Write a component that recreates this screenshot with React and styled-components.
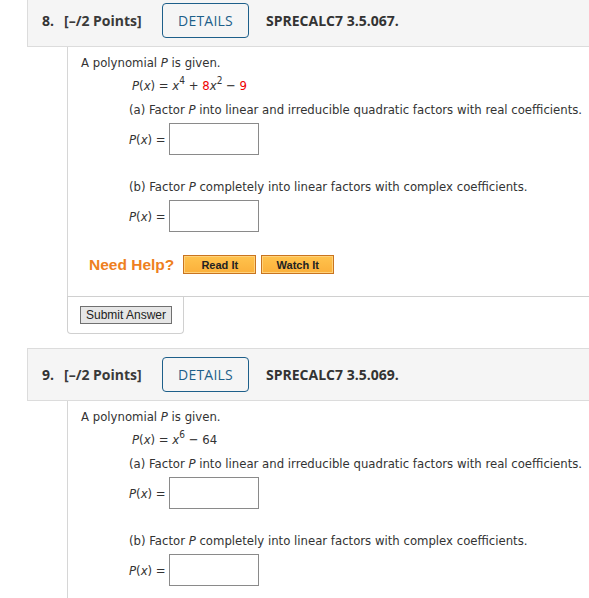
import React from 'react'
import styled, { createGlobalStyle } from 'styled-components'

const GlobalStyle = createGlobalStyle`
body {
  margin: 0;
  background: #fff;
  overflow: hidden;
}
`

const questions = [
  { num: '8.', code: 'SPRECALC7 3.5.067.', kind: 'quartic', help: true },
  { num: '9.', code: 'SPRECALC7 3.5.069.', kind: 'sixth', help: false },
]

const Poly = ({ kind }) =>
  kind === 'quartic' ? (
    <>
      <I>x</I><Sup>4</Sup> + <Red>8</Red><I>x</I><Sup>2</Sup> − <Red>9</Red>
    </>
  ) : (
    <>
      <I>x</I><Sup>6</Sup> − 64
    </>
  )

const Question = ({ q }) => (
  <Block>
    <Header>
      <Num>{q.num}</Num>
      <Points>[–/2 Points]</Points>
      <DetailsBtn>DETAILS</DetailsBtn>
      <Code>{q.code}</Code>
    </Header>
    <Body>
      <Line $top={0}>A polynomial <I>P</I> is given.</Line>
      <Indent>
        <Equation><I>P</I>(<I>x</I>) = <Poly kind={q.kind} /></Equation>
        <Line $top={6}>(a) Factor <I>P</I> into linear and irreducible quadratic factors with real coefficients.</Line>
        <AnswerRow>
          <Label><I>P</I>(<I>x</I>) =</Label>
          <AnswerBox />
        </AnswerRow>
        <Line $top={23}>(b) Factor <I>P</I> completely into linear factors with complex coefficients.</Line>
        <AnswerRow>
          <Label><I>P</I>(<I>x</I>) =</Label>
          <AnswerBox />
        </AnswerRow>
      </Indent>
      {q.help && (
        <HelpRow>
          <NeedHelp>Need Help?</NeedHelp>
          <HelpBtn>Read It</HelpBtn>
          <HelpBtn>Watch It</HelpBtn>
        </HelpRow>
      )}
    </Body>
    {q.help && (
      <Footer>
        <SubmitBox>
          <SubmitBtn>Submit Answer</SubmitBtn>
        </SubmitBox>
      </Footer>
    )}
  </Block>
)

const App = () => (
  <>
    <GlobalStyle />
    <Page>
      {questions.map((q) => (
        <Question key={q.num} q={q} />
      ))}
    </Page>
  </>
)

export default App

const Page = styled.div`
margin-top: -6px;
padding-left: 27px;
display: flex;
flex-direction: column;
gap: 14px;
`

const Block = styled.div`
display: flex;
flex-direction: column;
`

const Header = styled.div`
height: 51px;
display: flex;
align-items: center;
background: #f5f5f5;
border: 1px solid #dcdcdc;
border-right: none;
padding-left: 14px;
font-family: "Open Sans", sans-serif;
font-weight: 700;
font-size: 14px;
color: #333;
`

const Num = styled.span`
width: 22px;
`

const Points = styled.span`
color: #3a3a3a;
width: 98px;
`

const DetailsBtn = styled.div`
box-sizing: border-box;
width: 87px;
height: 35px;
border: 1px solid #1d5f8a;
border-radius: 4px;
display: flex;
align-items: center;
justify-content: center;
font-weight: 400;
color: #1d5f8a;
letter-spacing: 0.2px;
margin-right: 17px;
`

const Code = styled.span`
color: #333;
`

const Body = styled.div`
margin-left: 40px;
border-left: 1px solid #d6d6d6;
padding: 7px 0 22px 13px;
font-family: "DejaVu Sans Condensed", "DejaVu Sans", sans-serif;
font-size: 13px;
color: #333;
`

const Indent = styled.div`
padding-left: 48px;
`

const Line = styled.div`
line-height: 18px;
margin-top: ${(p) => p.$top}px;
`

const Equation = styled.div`
line-height: 18px;
margin-top: 5px;
padding-left: 3px;
`

const I = styled.i`
font-style: italic;
`

const Red = styled.span`
color: #e00;
`

const Sup = styled.sup`
font-size: 10px;
line-height: 0;
vertical-align: 6px;
`

const AnswerRow = styled.div`
display: flex;
align-items: center;
margin-top: 4px;
`

const Label = styled.span`
width: 40px;
`

const AnswerBox = styled.div`
box-sizing: border-box;
width: 90px;
height: 32px;
border: 1px solid #8a8a8a;
background: #fff;
`

const HelpRow = styled.div`
display: flex;
align-items: center;
gap: 5px;
margin-top: 23px;
padding-left: 8px;
`

const NeedHelp = styled.span`
font-family: "Liberation Sans", Arial, sans-serif;
font-weight: 700;
font-size: 15.5px;
color: #ee7f21;
margin-right: 4px;
`

const HelpBtn = styled.div`
box-sizing: border-box;
height: 19px;
width: 73px;
border: 1px solid #c9741f;
box-shadow: inset 0 0 0 1px #ffd27a;
background: linear-gradient(#ffc34d, #fbb03b);
display: flex;
align-items: center;
justify-content: center;
font-family: "Liberation Sans", Arial, sans-serif;
font-weight: 700;
font-size: 11px;
color: #222;
`

const Footer = styled.div`
margin-left: 40px;
border-top: 1px solid #d0d0d0;
`

const SubmitBox = styled.div`
box-sizing: border-box;
width: 117px;
height: 37px;
border: 1px solid #d0d0d0;
border-top: none;
border-radius: 0 0 4px 4px;
display: flex;
align-items: center;
padding-left: 12px;
`

const SubmitBtn = styled.div`
box-sizing: border-box;
height: 18px;
padding: 0 5px;
border: 1px solid #707070;
background: #e6e6e6;
font-family: "Liberation Sans", Arial, sans-serif;
font-size: 12px;
color: #222;
line-height: 16px;
`
